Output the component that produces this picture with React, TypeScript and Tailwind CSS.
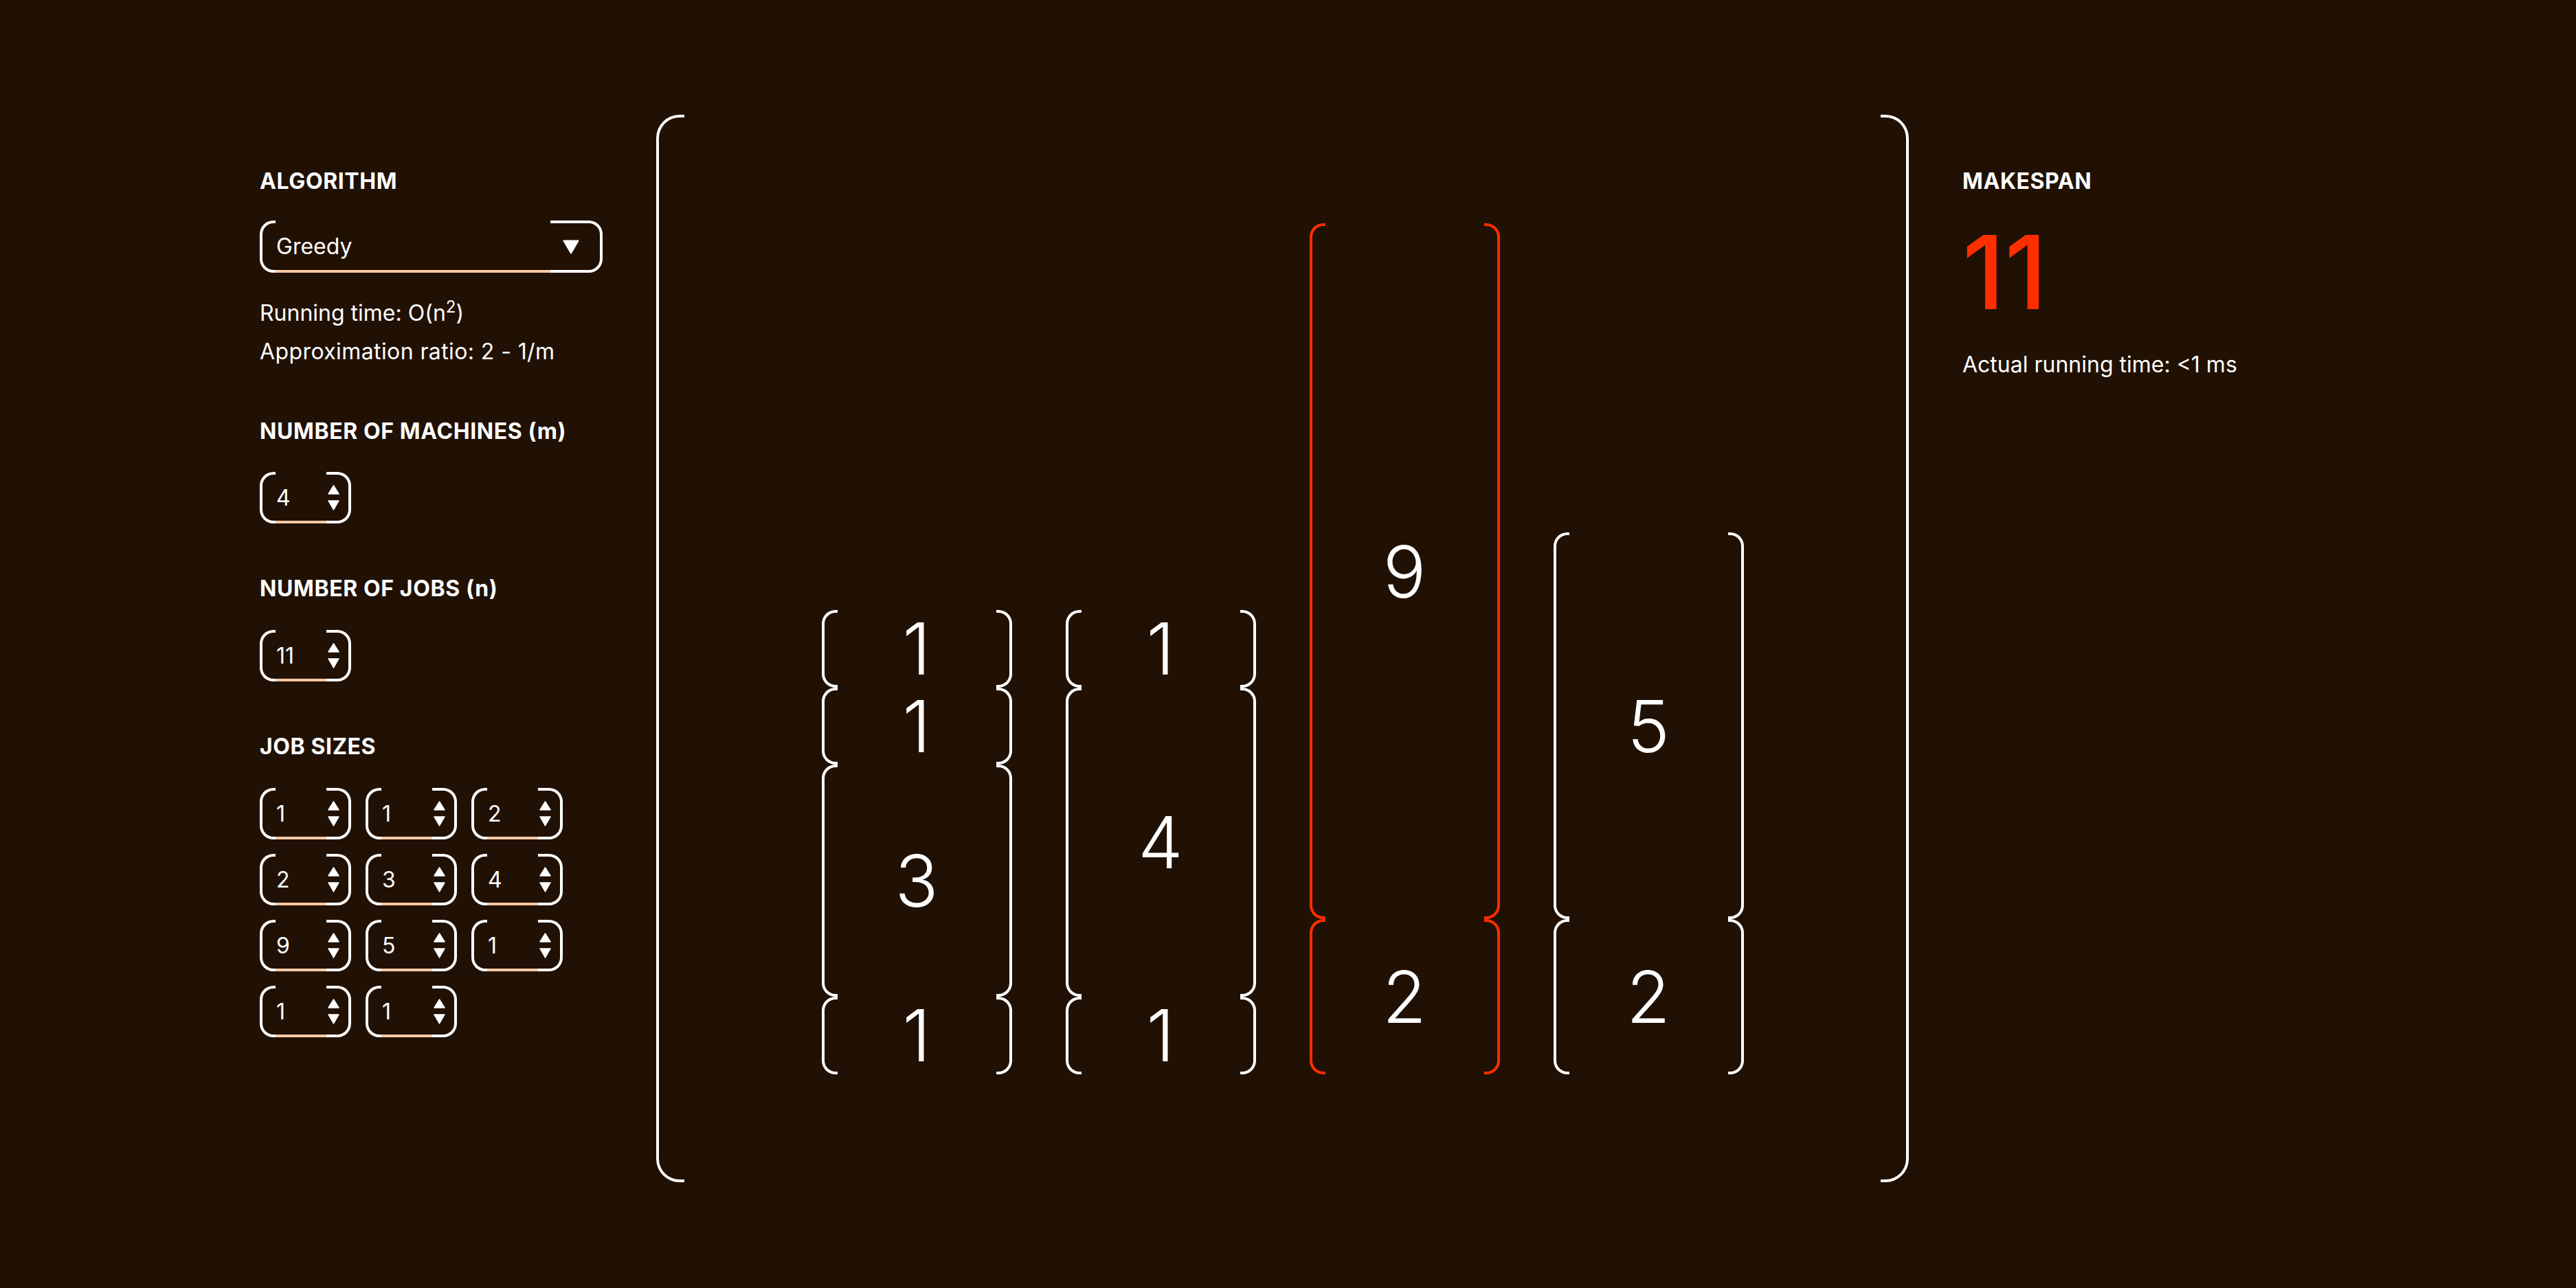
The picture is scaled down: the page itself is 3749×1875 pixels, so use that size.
import React from "react";

const UNIT = 112.6;

const columns: { blocks: number[]; red?: boolean }[] = [
  { blocks: [1, 1, 3, 1] },
  { blocks: [1, 4, 1] },
  { blocks: [9, 2], red: true },
  { blocks: [5, 2] },
];

const jobSizes = [1, 1, 2, 2, 3, 4, 9, 5, 1, 1, 1];

function Spinner() {
  return (
    <svg width="17" height="37" viewBox="0 0 17 37" className="block">
      <polygon points="1,13 8.5,1 16,13" fill="#ffffff" stroke="#ffffff" strokeWidth="1.5" strokeLinejoin="round" />
      <polygon points="1,23 16,23 8.5,36" fill="#ffffff" stroke="#ffffff" strokeWidth="1.5" strokeLinejoin="round" />
    </svg>
  );
}

function NumberBox({ value }: { value: number }) {
  return (
    <div className="flex h-[75px] w-[133px]">
      <div className="w-[23px] shrink-0 rounded-l-[20px] border-y-4 border-l-4 border-white" />
      <div className="flex flex-1 items-center border-y-4 border-t-transparent border-b-[#fdc9a3] pl-[1px] text-[32px] leading-none text-white">
        {value}
      </div>
      <div className="flex w-[36px] shrink-0 items-center rounded-r-[20px] border-y-4 border-r-4 border-white pl-[2px]">
        <Spinner />
      </div>
    </div>
  );
}

function SelectBox() {
  return (
    <div className="flex h-[76px] w-[499px]">
      <div className="w-[23px] shrink-0 rounded-l-[20px] border-y-4 border-l-4 border-white" />
      <div className="flex flex-1 items-center border-y-4 border-t-transparent border-b-[#fdc9a3] pl-[1px] text-[32px] leading-none text-white">
        Greedy
      </div>
      <div className="flex w-[76px] shrink-0 items-center rounded-r-[20px] border-y-4 border-r-4 border-white pl-[18px]">
        <svg width="24" height="21" viewBox="0 0 24 21" className="block">
          <polygon points="1.5,1.5 22.5,1.5 12,19.5" fill="#ffffff" stroke="#ffffff" strokeWidth="2" strokeLinejoin="round" />
        </svg>
      </div>
    </div>
  );
}

function JobBlock({ size, red }: { size: number; red?: boolean }) {
  return (
    <div className="flex w-full" style={{ height: `${size * UNIT}px` }}>
      <div
        className={
          red
            ? "w-[23px] shrink-0 rounded-l-[20px] border-y-4 border-l-4 border-[#ff2e00]"
            : "w-[23px] shrink-0 rounded-l-[20px] border-y-4 border-l-4 border-white"
        }
      />
      <div className="flex flex-1 items-center justify-center text-[104px] font-light leading-[100px] text-white">
        {size}
      </div>
      <div
        className={
          red
            ? "w-[23px] shrink-0 rounded-r-[20px] border-y-4 border-r-4 border-[#ff2e00]"
            : "w-[23px] shrink-0 rounded-r-[20px] border-y-4 border-r-4 border-white"
        }
      />
    </div>
  );
}

function Heading({ children }: { children: React.ReactNode }) {
  return (
    <div className="text-[32px] font-bold leading-[32px] tracking-[0.6px] text-white">{children}</div>
  );
}

export default function App() {
  return (
    <div className="flex h-[1875px] w-[3749px] items-start gap-[78px] overflow-hidden bg-[#211104] pl-[378px] font-['Inter',sans-serif] text-white">
      {/* Left panel */}
      <div className="flex w-[499px] shrink-0 flex-col pt-[248px]">
        <Heading>ALGORITHM</Heading>
        <div className="mt-[41px]">
          <SelectBox />
        </div>
        <div className="mt-[31px] text-[32px] leading-[56px]">
          <div>
            Running time: O(n<sup>2</sup>)
          </div>
          <div className="tracking-[0.4px]">Approximation ratio: 2 - 1/m</div>
        </div>
        <div className="mt-[72px]">
          <Heading>NUMBER OF MACHINES (m)</Heading>
        </div>
        <div className="mt-[43px]">
          <NumberBox value={4} />
        </div>
        <div className="mt-[79px]">
          <Heading>NUMBER OF JOBS (n)</Heading>
        </div>
        <div className="mt-[44px]">
          <NumberBox value={11} />
        </div>
        <div className="mt-[79px]">
          <Heading>JOB SIZES</Heading>
        </div>
        <div className="mt-[44px] grid w-[441px] grid-cols-3 gap-x-[21px] gap-y-[21px]">
          {jobSizes.map((v, i) => (
            <NumberBox key={i} value={v} />
          ))}
        </div>
      </div>

      {/* Schedule container */}
      <div className="mt-[167px] flex h-[1554px] w-[1823px] shrink-0">
        <div className="w-[41px] shrink-0 rounded-l-[34px] border-y-4 border-l-4 border-white" />
        <div className="flex flex-1 items-center justify-center">
          <div className="flex h-[1239px] items-end gap-[78px]">
            {columns.map((col, ci) => (
              <div key={ci} className="flex w-[277px] flex-col">
                {col.blocks.map((b, bi) => (
                  <JobBlock key={bi} size={b} red={col.red} />
                ))}
              </div>
            ))}
          </div>
        </div>
        <div className="w-[41px] shrink-0 rounded-r-[34px] border-y-4 border-r-4 border-white" />
      </div>

      {/* Right panel */}
      <div className="flex w-[499px] shrink-0 flex-col pt-[248px]">
        <Heading>MAKESPAN</Heading>
        <div className="mt-[43px] text-[148px] font-medium leading-[148px] text-[#ff2e00]">11</div>
        <div className="mt-[44px] text-[32px] leading-[32px]">Actual running time: &lt;1 ms</div>
      </div>
    </div>
  );
}
